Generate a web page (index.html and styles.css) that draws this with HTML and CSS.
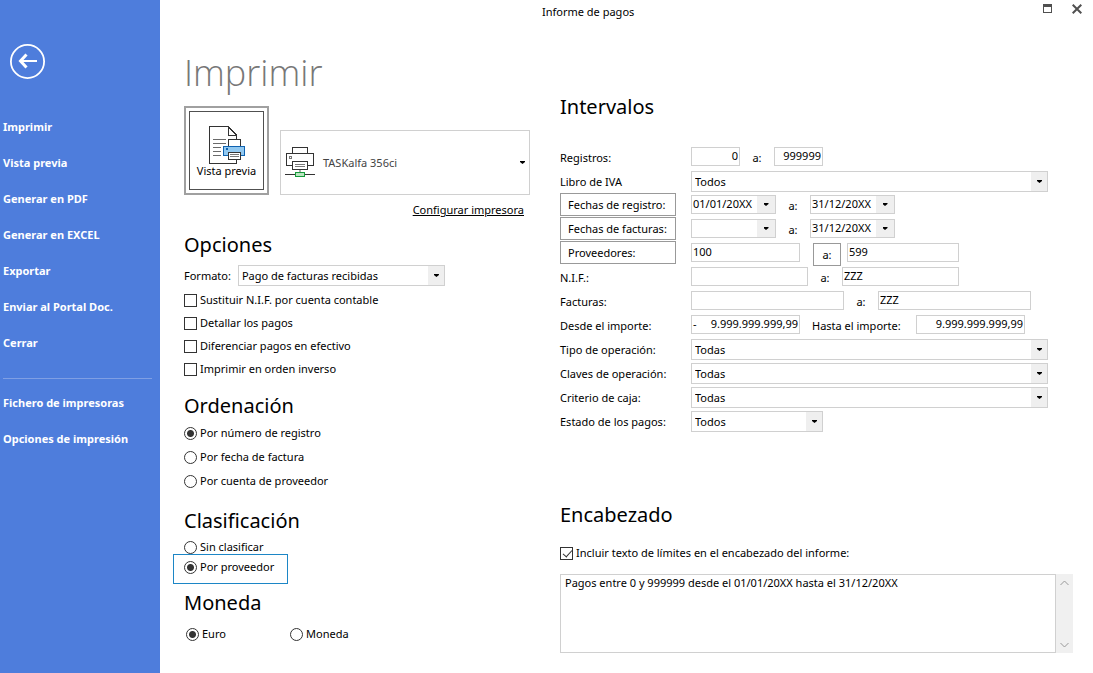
FILE: index.html
```html
<!DOCTYPE html>
<html lang="es">
<head>
<meta charset="utf-8">
<title>Informe de pagos</title>
<link rel="stylesheet" href="styles.css">
</head>
<body>
<div class="app">
  <aside class="sidebar">
    <button class="back" aria-label="Volver">
      <svg width="36" height="36" viewBox="0 0 36 36" fill="none" stroke="#fff"><circle cx="17.500" cy="17.500" r="16.600" stroke-width="1.800"/><path d="M10 17H27" stroke-width="2"/><path d="M16.500 10.500L10.500 17L16.500 23.500" stroke-width="3"/></svg>
    </button>
    <nav class="menu">
      <a href="#">Imprimir</a>
      <a href="#">Vista previa</a>
      <a href="#">Generar en PDF</a>
      <a href="#">Generar en EXCEL</a>
      <a href="#">Exportar</a>
      <a href="#">Enviar al Portal Doc.</a>
      <a href="#">Cerrar</a>
      <hr class="rule">
      <a href="#">Fichero de impresoras</a>
      <a href="#">Opciones de impresión</a>
    </nav>
  </aside>
  <main class="main">
    <header class="titlebar">
      <span class="caption">Informe de pagos</span>
      <button class="winbtn" aria-label="Maximizar"><svg width="9" height="9" viewBox="0 0 9 9"><path d="M0 0H9V9H0ZM1 3V8H8V3Z" fill="#505050" fill-rule="evenodd"/></svg></button>
      <button class="winbtn" aria-label="Cerrar"><svg width="10" height="10" viewBox="0 0 10 10"><path d="M.7.7L9.300 9.300M9.300.7L.7 9.300" stroke="#505050" stroke-width="2"/></svg></button>
    </header>
    <div class="columns">
      <section class="left">
        <h1>Imprimir</h1>
        <div class="printer-row">
          <button class="preview">
            <span class="preview-inner">
              <svg width="38" height="39" viewBox="0 0 38 39" fill="none" shape-rendering="crispEdges">
                <path d="M1.500.5H20.500L28.500 9.500V37.500H1.500Z" fill="#fff" stroke="#333"/>
                <path d="M20.500.5V9.500H28.500" stroke="#333"/><path d="M20.500.5L28.500 9.500" stroke="#333" stroke-width="1.500"/>
                <path d="M5 13.500H18M5 17.500H18M5 21.500H13M5 25.500H13M5 29.500H13" stroke="#6a6a6a"/>
                <path d="M20.500 13.500H32.500V21H20.500Z" fill="#fff" stroke="#333"/>
                <path d="M15.500 20.500H36.500V29.500H15.500Z" fill="#91c8f0" stroke="#0f62b0"/>
                <path d="M18 22H20V24H18Z" fill="#0f62b0"/>
                <path d="M20.500 26.500H32.500V33.500H20.500Z" fill="#fff" stroke="#333"/>
                <path d="M22 28.500H31M22 30.500H31" stroke="#777"/>
              </svg>
              <span>Vista previa</span>
            </span>
          </button>
          <button class="printer">
            <svg width="30" height="31" viewBox="0 0 30 31" fill="none" shape-rendering="crispEdges">
              <path d="M7.500 7V.5H22.500V7" stroke="#333"/>
              <path d="M1.500 6.500H28.500V18.500H1.500Z" fill="#fff" stroke="#333"/>
              <path d="M4.500 9.500H6.500V11.500H4.500Z" stroke="#777"/>
              <path d="M7.500 14.500H22.500V22.500H7.500Z" fill="#fff" stroke="#333"/>
              <path d="M10 17.500H20M10 19.500H20" stroke="#777"/>
              <path d="M15 23V25" stroke="#aaa" stroke-width="2"/>
              <path d="M0 27.500H30" stroke="#333"/>
              <path d="M10.500 25.500H19.500V29.500H10.500Z" fill="#b9e6c0" stroke="#159a3a"/>
            </svg>
            <span class="printer-name">TASKalfa 356ci</span>
            <span class="arrow"></span>
          </button>
        </div>
        <a class="configure" href="#">Configurar impresora</a>

        <h2>Opciones</h2>
        <div class="format">
          <label for="formato">Formato:</label>
          <span class="select"><select id="formato"><option>Pago de facturas recibidas</option></select></span>
        </div>
        <div class="checks">
          <label class="option"><input type="checkbox">Sustituir N.I.F. por cuenta contable</label>
          <label class="option"><input type="checkbox">Detallar los pagos</label>
          <label class="option"><input type="checkbox">Diferenciar pagos en efectivo</label>
          <label class="option"><input type="checkbox">Imprimir en orden inverso</label>
        </div>

        <h2>Ordenación</h2>
        <div class="order">
          <label class="option"><input type="radio" name="orden" checked>Por número de registro</label>
          <label class="option"><input type="radio" name="orden">Por fecha de factura</label>
          <label class="option"><input type="radio" name="orden">Por cuenta de proveedor</label>
        </div>

        <h2>Clasificación</h2>
        <div class="classify">
          <label class="option"><input type="radio" name="clase">Sin clasificar</label>
          <label class="option marked"><input type="radio" name="clase" checked>Por proveedor</label>
        </div>

        <h2>Moneda</h2>
        <div class="currency">
          <label class="option"><input type="radio" name="moneda" checked>Euro</label>
          <label class="option"><input type="radio" name="moneda">Moneda</label>
        </div>
      </section>

      <section class="right">
        <h2>Intervalos</h2>
        <div class="ranges">
          <div class="row"><label class="name" for="reg1">Registros:</label><input class="w49 num" id="reg1" value="0"><label class="to g34" for="reg2">a:</label><input class="w49 num" id="reg2" value="999999"></div>
          <div class="row"><label class="name" for="iva">Libro de IVA</label><span class="select grow"><select id="iva"><option>Todos</option></select></span></div>
          <div class="row"><button class="name">Fechas de registro:</button><span class="date"><input aria-label="Fecha de registro desde" value="01/01/20XX"><button aria-label="Elegir fecha"><span class="arrow"></span></button></span><label class="to g34" for="fr2">a:</label><span class="date"><input id="fr2" value="31/12/20XX"><button aria-label="Elegir fecha"><span class="arrow"></span></button></span></div>
          <div class="row"><button class="name">Fechas de facturas:</button><span class="date"><input aria-label="Fecha de factura desde"><button aria-label="Elegir fecha"><span class="arrow"></span></button></span><label class="to g34" for="ff2">a:</label><span class="date"><input id="ff2" value="31/12/20XX"><button aria-label="Elegir fecha"><span class="arrow"></span></button></span></div>
          <div class="row"><button class="name">Proveedores:</button><input class="w109" aria-label="Proveedor desde" value="100"><button class="swap">a:</button><input class="w112" aria-label="Proveedor hasta" value="599"></div>
          <div class="row"><label class="name" for="nif1">N.I.F.:</label><input class="w117" id="nif1"><label class="to g34" for="nif2">a:</label><input class="w117" id="nif2" value="ZZZ"></div>
          <div class="row"><label class="name" for="fac1">Facturas:</label><input class="w153" id="fac1"><label class="to g34" for="fac2">a:</label><input class="w153" id="fac2" value="ZZZ"></div>
          <div class="row"><label class="name" for="imp1">Desde el importe:</label><span class="amount"><span>-</span><input id="imp1" value="9.999.999.999,99"></span><label class="until" for="imp2">Hasta el importe:</label><input class="w109 num" id="imp2" value="9.999.999.999,99"></div>
          <div class="row"><label class="name" for="tipo">Tipo de operación:</label><span class="select grow"><select id="tipo"><option>Todas</option></select></span></div>
          <div class="row"><label class="name" for="claves">Claves de operación:</label><span class="select grow"><select id="claves"><option>Todas</option></select></span></div>
          <div class="row"><label class="name" for="caja">Criterio de caja:</label><span class="select grow"><select id="caja"><option>Todas</option></select></span></div>
          <div class="row"><label class="name" for="estado">Estado de los pagos:</label><span class="select w132"><select id="estado"><option>Todos</option></select></span></div>
        </div>

        <h2>Encabezado</h2>
        <label class="option include"><input type="checkbox" checked>Incluir texto de límites en el encabezado del informe:</label>
        <div class="memo">
          <textarea aria-label="Texto del encabezado">Pagos entre 0 y 999999 desde el 01/01/20XX hasta el 31/12/20XX</textarea>
          <div class="scroll">
            <button aria-label="Subir"><svg width="9" height="6" viewBox="0 0 9 6" fill="none" stroke="#999"><path d="M.5 5L4.500 1L8.500 5"/></svg></button>
            <button aria-label="Bajar"><svg width="9" height="6" viewBox="0 0 9 6" fill="none" stroke="#999"><path d="M.5 1L4.500 5L8.500 1"/></svg></button>
          </div>
        </div>
      </section>
    </div>
  </main>
</div>
</body>
</html>
```

FILE: styles.css
```css
* { box-sizing: border-box; }
body {
  margin: 0;
  background: #fff;
  color: #000;
  font: 11px/16px "Segoe UI", "Noto Sans", "Open Sans", sans-serif;
}
button, input, select, textarea {
  font: inherit;
  color: inherit;
  margin: 0;
  padding: 0;
  background: #fff;
  border: 1px solid #d0d0d0;
  border-radius: 0;
}
.app { display: flex; min-height: 100vh; }

.sidebar { width: 160px; flex: none; background: #4e7ddc; padding-top: 44px; }
.back { display: block; margin-left: 10px; border: 0; background: none; height: 36px; }
.back svg { display: block; }
.menu { display: flex; flex-direction: column; padding: 29px 8px 0 3px; }
.menu a {
  color: #fff;
  font-weight: 700;
  line-height: 36px;
  text-decoration: none;
  white-space: nowrap;
}
.rule { width: 100%; margin: 17px 0 6px; border: 0; border-top: 1px solid #7f9fe4; }

.main { flex: 1; min-width: 0; }
.titlebar { display: flex; align-items: center; height: 24px; padding: 0 11px 0 382px; }
.caption { margin-right: auto; }
.winbtn { border: 0; display: flex; align-items: center; margin-bottom: 7px; }
.winbtn + .winbtn { margin-left: 20px; }

.columns { display: grid; grid-template-columns: 346px minmax(0, 1fr); gap: 30px; padding: 0 20px 20px 24px; }
h1 { margin: 0; font: 300 36px/48px "Segoe UI", "Open Sans", "Noto Sans", sans-serif; color: #777; }
h2 { margin: 0; font-size: 20px; line-height: 28px; font-weight: 400; }
.left { padding-top: 25px; display: flex; flex-direction: column; }
.right { padding-top: 69px; }

.printer-row { display: flex; align-items: flex-end; gap: 11px; margin-top: 9px; }
.preview { width: 85px; height: 89px; padding: 3px; border: 2px solid #a0a0a0; }
.preview-inner {
  display: flex;
  flex-direction: column;
  align-items: center;
  height: 100%;
  padding-top: 14px;
  border: 1px solid #505050;
  line-height: 12px;
}
.printer { flex: 1; display: flex; align-items: center; height: 65px; padding: 0 4px; text-align: left; }
.printer-name { flex: 1; margin-left: 8px; color: #444; }
.arrow { width: 5px; height: 3px; background: currentColor; clip-path: polygon(0 0, 100% 0, 100% 34%, 50% 100%, 0 34%); }
.configure { align-self: flex-end; margin: 7px 6px 0 0; color: #000; }

.left h2 { margin-top: 13px; }
.format { display: flex; align-items: center; gap: 7px; margin-top: 6px; }
.format .select { width: 207px; }
.select { position: relative; display: block; height: 21px; border: 1px solid #d0d0d0; }
.select select {
  display: block;
  width: 100%;
  height: 19px;
  padding: 0 20px 0 3px;
  border: 0;
  appearance: none;
}
.select::before {
  content: "";
  position: absolute;
  top: 0;
  right: 0;
  width: 16px;
  height: 100%;
  background: #efefef;
  pointer-events: none;
}
.select::after {
  content: "";
  position: absolute;
  top: 8px;
  right: 5px;
  width: 5px;
  height: 3px;
  background: #000;
  clip-path: polygon(0 0, 100% 0, 100% 34%, 50% 100%, 0 34%);
  pointer-events: none;
}

.option { display: flex; align-items: center; gap: 3px; white-space: nowrap; }
.option input { appearance: none; flex: none; width: 13px; height: 13px; border: 1px solid #333; }
.option input[type="radio"] { border-radius: 50%; }
.option input[type="radio"]:checked { background: radial-gradient(circle, #333 0 3px, #fff 4px); }
.option input[type="checkbox"]:checked::before {
  content: "";
  display: block;
  width: 4px;
  height: 8px;
  margin: 0 0 0 4px;
  border: solid #333;
  border-width: 0 1px 1px 0;
  transform: rotate(42deg);
}
.checks { display: grid; gap: 7px; margin-top: 6px; }
.order { display: grid; gap: 8px; margin-top: 5px; }
.left .checks + h2 { margin-top: 15px; }
.left .order + h2 { margin-top: 18px; }
.classify { margin-top: 4px; }
.marked { width: 115px; height: 30px; margin: -1px 0 0 -11px; padding: 0 0 4px 10px; border: 1px solid #1c86c6; }
.left .classify + h2 { margin-top: 5px; }
.currency { display: grid; grid-template-columns: 104px auto; margin: 9px 0 0 2px; }

.ranges { padding: 24px 25px 0 0; }
.row { display: flex; align-items: flex-start; height: 24px; }
.row > input, .row > .select, .row > .date, .row > .amount { margin-top: 2px; }
.row input { height: 19px; padding: 0 1px 2px 1px; }
.name { width: 131px; flex: none; white-space: nowrap; }
label.name, .to, .until { line-height: 26px; }
button.name { width: 116px; height: 23px; margin-right: 15px; padding-left: 7px; border-color: #999; text-align: left; }
.grow { flex: 1; min-width: 0; }
.g34 { width: 34px; text-align: center; }
.w49 { width: 49px; }
.w109 { width: 109px; }
.w112 { width: 112px; }
.w117 { width: 117px; }
.w132 { width: 132px; }
.w153 { width: 153px; }
.num { text-align: right; }
.date { display: flex; width: 85px; border: 1px solid #d0d0d0; }
.date input { flex: 1; min-width: 0; width: 0; height: 17px; border: 0; }
.date button { display: flex; align-items: center; justify-content: center; width: 18px; border: 0; background: #efefef; }
.swap { width: 28px; height: 23px; margin: 2px 6px 0 13px; border-color: #999; }
.amount { display: flex; width: 109px; padding-left: 1px; border: 1px solid #d0d0d0; }
.amount input { flex: 1; min-width: 0; width: 0; height: 17px; border: 0; text-align: right; }
.until { width: 116px; padding-left: 12px; white-space: nowrap; }

.ranges + h2 { margin-top: 68px; }
.include { margin-top: 16px; }
.memo { display: flex; margin-top: 13px; }
.memo textarea { flex: 1; height: 79px; padding: 0 4px; resize: none; }
.scroll { display: flex; flex-direction: column; justify-content: space-between; width: 17px; background: #f0f0f0; }
.scroll button { display: flex; align-items: center; justify-content: center; height: 17px; border: 0; background: none; }
```
